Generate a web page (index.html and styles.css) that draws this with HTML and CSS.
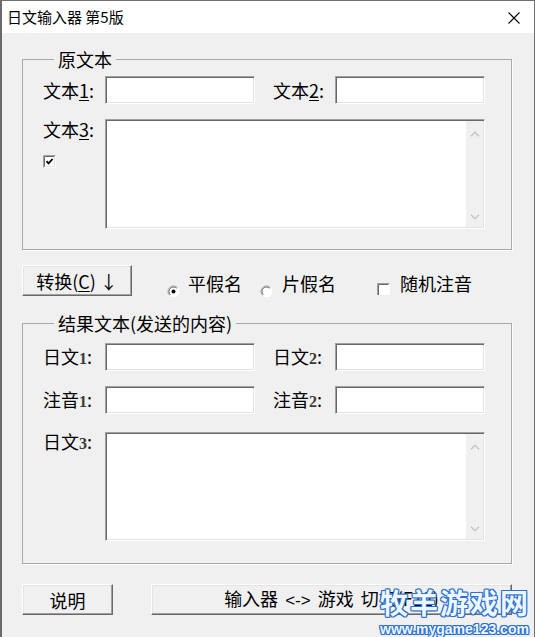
FILE: index.html
```html
<!DOCTYPE html>
<html lang="zh-CN">
<head>
    <meta charset="UTF-8">
    <title>日文输入器 第5版</title>
    <link rel="stylesheet" href="styles.css">
</head>
<body>
<div class="window">
    <div class="title-bar">
        <span class="title">日文输入器 第5版</span>
        <svg class="close" width="12" height="12" viewBox="0 0 12 12"><path d="M0.5 0.5 11.5 11.5M11.5 0.5 0.5 11.5" stroke="#000" stroke-width="1.1" fill="none"/></svg>
    </div>
    <div class="client">
        <fieldset class="group group-src">
            <legend>原文本</legend>
            <div class="row">
                <span class="lbl">文本<u>1</u>:</span>
                <div class="edit"></div>
                <span class="lbl lbl-2">文本<u>2</u>:</span>
                <div class="edit"></div>
            </div>
            <div class="memo-row">
                <div class="side">
                    <span class="lbl">文本<u>3</u>:</span>
                    <svg class="check" width="13" height="13" viewBox="0 0 13 13">
                        <rect width="13" height="13" fill="#fff"/>
                        <path d="M0.5 12.5H12.5V0.5" stroke="#fff" fill="none"/>
                        <path d="M1.5 11.5H11.5V1.5" stroke="#e3e3e3" fill="none"/>
                        <path d="M0.5 12.5V0.5H12.5" stroke="#a0a0a0" fill="none"/>
                        <path d="M1.5 11.5V1.5H11.5" stroke="#696969" fill="none"/>
                        <path d="M3.5 6.2 5.5 8.4 9.6 4" stroke="#000" stroke-width="1.8" fill="none"/>
                    </svg>
                </div>
                <div class="memo">
                    <div class="vscroll">
                        <svg width="10" height="6" viewBox="0 0 10 6"><path d="M1 5.2 5 1.3 9 5.2" stroke="#c6c6c6" stroke-width="1.5" fill="none"/></svg>
                        <svg width="10" height="6" viewBox="0 0 10 6"><path d="M1 0.8 5 4.7 9 0.8" stroke="#c6c6c6" stroke-width="1.5" fill="none"/></svg>
                    </div>
                </div>
            </div>
        </fieldset>

        <div class="options">
            <button class="btn btn-convert">转换(<u>C</u>) ↓</button>
            <div class="opt opt-hira">
                <svg width="13" height="12" viewBox="0 0 13 12">
                    <circle cx="6.5" cy="6.5" r="5.5" fill="#fff" stroke="#fff"/>
                    <path d="M2.6 10.4A5.5 5.5 0 0 1 10.4 2.6" stroke="#a0a0a0" fill="none"/>
                    <path d="M3.3 9.7A4.5 4.5 0 0 1 9.7 3.3" stroke="#696969" fill="none"/>
                    <circle cx="6.5" cy="6.5" r="2" fill="#000"/>
                </svg>
                <span>平假名</span>
            </div>
            <div class="opt opt-kata">
                <svg width="13" height="12" viewBox="0 0 13 12">
                    <circle cx="6.5" cy="6.5" r="5.5" fill="#fff" stroke="#fff"/>
                    <path d="M2.6 10.4A5.5 5.5 0 0 1 10.4 2.6" stroke="#a0a0a0" fill="none"/>
                    <path d="M3.3 9.7A4.5 4.5 0 0 1 9.7 3.3" stroke="#696969" fill="none"/>
                </svg>
                <span>片假名</span>
            </div>
            <div class="opt opt-random">
                <svg width="13" height="12" viewBox="0 0 13 12">
                    <rect width="13" height="12" fill="#fff"/>
                    <path d="M0.5 12V0.5H12.5" stroke="#a0a0a0" fill="none"/>
                    <path d="M1.5 12V1.5H11.5" stroke="#696969" fill="none"/>
                </svg>
                <span>随机注音</span>
            </div>
        </div>

        <fieldset class="group group-out">
            <legend>结果文本(发送的内容)</legend>
            <div class="row">
                <span class="lbl">日文<span class="num">1</span>:</span>
                <div class="edit"></div>
                <span class="lbl lbl-2">日文<span class="num">2</span>:</span>
                <div class="edit"></div>
            </div>
            <div class="row row-gap">
                <span class="lbl">注音<span class="num">1</span>:</span>
                <div class="edit"></div>
                <span class="lbl lbl-2">注音<span class="num">2</span>:</span>
                <div class="edit"></div>
            </div>
            <div class="memo-row memo-row-out">
                <div class="side">
                    <span class="lbl">日文<span class="num">3</span>:</span>
                </div>
                <div class="memo memo-out">
                    <div class="vscroll">
                        <svg width="10" height="6" viewBox="0 0 10 6"><path d="M1 5.2 5 1.3 9 5.2" stroke="#c6c6c6" stroke-width="1.5" fill="none"/></svg>
                        <svg width="10" height="6" viewBox="0 0 10 6"><path d="M1 0.8 5 4.7 9 0.8" stroke="#c6c6c6" stroke-width="1.5" fill="none"/></svg>
                    </div>
                </div>
            </div>
        </fieldset>

        <div class="bottom">
            <button class="btn btn-help">说明</button>
            <button class="btn btn-switch">输入器 <span class="arrow">&lt;-&gt;</span> 游戏 切换(F12)</button>
        </div>
    </div>

    <div class="watermark">
        <div class="wm-name">牧羊游戏网</div>
        <div class="wm-url">www.mygame123.com</div>
    </div>
</div>
</body>
</html>
```

FILE: styles.css
```css
*{
    box-sizing: border-box;
}
body{
    margin: 0;
    background-color: #f0f0f0;
    font-family: "Noto Sans CJK SC", "Liberation Sans", sans-serif;
    font-size: 18px;
    color: #000;
}
.window{
    position: relative;
    width: 535px;
    height: 637px;
    border-top: 1px solid #707070;
    border-left: 2px solid #6a6a6a;
    border-right: 1px solid #707070;
    overflow: hidden;
}
.title-bar{
    height: 32px;
    background-color: #fff;
    display: flex;
    align-items: center;
    justify-content: space-between;
    padding: 0 14px 0 5px;
}
.title{
    font-size: 15px;
    line-height: 20px;
}
.close{
    margin-top: 2px;
}
.client{
    padding: 16px 0 0 20px;
}

/* group boxes */
.group{
    width: 490px;
    min-width: 0;
    margin: 0;
    padding: 7px 0 20px 20px;
    border: 1px solid #a9a9a9;
    box-shadow: 1px 1px 0 #fff;
}
.group legend{
    margin-left: 11px;
    padding: 0 4px;
    line-height: 20px;
}
.group-out{
    margin-top: 17px;
    padding-top: 10px;
    padding-bottom: 22px;
}
.row{
    display: flex;
    align-items: center;
    height: 28px;
}
.row-gap{
    margin-top: 15px;
}
.lbl{
    flex: 0 0 62px;
    line-height: 28px;
    white-space: nowrap;
}
.lbl-2{
    margin-left: 18px;
}
.lbl u{
    text-underline-offset: 2px;
}
.num{
    font-family: "Liberation Serif", serif;
    font-weight: bold;
    font-size: 16px;
    color: #3a3a3a;
}
.edit,
.memo{
    background-color: #fff;
    border: 1px solid;
    border-color: #a0a0a0 #fff #fff #a0a0a0;
    box-shadow: inset 1px 1px 0 #696969, inset -1px -1px 0 #e3e3e3;
}
.edit{
    width: 150px;
    height: 28px;
}
.memo-row{
    display: flex;
    margin-top: 15px;
}
.memo-row-out{
    margin-top: 18px;
}
.side{
    flex: 0 0 62px;
    display: flex;
    flex-direction: column;
    align-items: flex-start;
}
.side .lbl{
    flex: none;
    line-height: 20px;
}
.memo-row-out .side .lbl{
    line-height: 18px;
}
.check{
    margin-top: 16px;
}
.memo{
    width: 380px;
    height: 110px;
    display: flex;
    justify-content: flex-end;
    padding: 1px 1px 1px 0;
}
.memo-out{
    height: 109px;
}
.vscroll{
    width: 17px;
    background-color: #f0f0f0;
    display: flex;
    flex-direction: column;
    justify-content: space-between;
    align-items: center;
    padding: 10px 0 7px;
}

/* buttons */
.btn{
    height: 31px;
    padding: 0;
    font-family: inherit;
    font-size: 18px;
    line-height: 20px;
    color: #000;
    background-color: #f0f0f0;
    border: 1px solid;
    border-color: #fff #696969 #696969 #fff;
    box-shadow: inset -1px -1px 0 #a0a0a0, inset 1px 1px 0 #e3e3e3;
}
.btn u{
    text-underline-offset: 2px;
}
.btn-convert{
    width: 110px;
}
.options{
    display: flex;
    align-items: flex-start;
    height: 31px;
    margin-top: 15px;
}
.opt{
    display: flex;
    align-items: flex-start;
    margin-top: 8px;
    line-height: 20px;
}
.opt svg{
    margin-top: 12px;
    margin-right: 8px;
}
.opt-hira{
    margin-left: 35px;
}
.opt-kata{
    margin-left: 18px;
}
.opt-kata svg{
    margin-right: 9px;
}
.opt-random{
    margin-left: 41px;
}
.opt-random svg{
    margin-top: 10px;
    margin-right: 10px;
}
.bottom{
    display: flex;
    margin-top: 20px;
}
.btn-help{
    width: 91px;
}
.btn-switch{
    width: 361px;
    margin-left: 38px;
    word-spacing: 3px;
}
.arrow{
    font-family: "Liberation Sans", sans-serif;
    font-size: 17px;
}

/* watermark over the corner */
.watermark{
    position: absolute;
    left: 378px;
    top: 584px;
    font-weight: bold;
    color: #eef6ff;
    text-shadow: 1px 0 #2a6fd2, -1px 0 #2a6fd2, 0 1px #2a6fd2, 0 -1px #2a6fd2,
        1px 1px #2a6fd2, -1px -1px #2a6fd2, 1px -1px #2a6fd2, -1px 1px #2a6fd2;
}
.wm-name{
    font-size: 28px;
    line-height: 34px;
    letter-spacing: 2px;
}
.wm-url{
    font-family: "Liberation Sans", sans-serif;
    font-size: 14px;
    line-height: 16px;
    margin-top: 2px;
}
```
